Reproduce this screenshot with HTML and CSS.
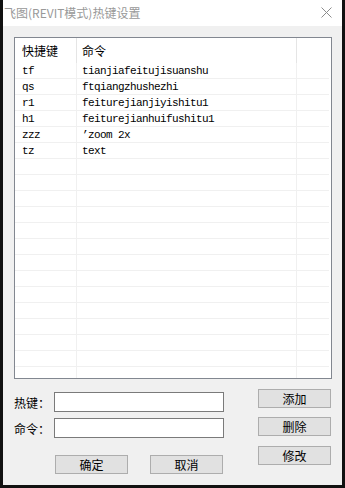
FILE: index.html
```html
<!DOCTYPE html>
<html lang="zh-CN">
<head>
    <meta charset="UTF-8">
    <meta name="viewport" content="width=device-width, initial-scale=1.0">
    <title>飞图(REVIT模式)热键设置</title>
    <link rel="stylesheet" href="styles.css">
</head>
<body>
    <div class="window">
        <!-- Title bar -->
        <div class="titlebar">
            <span class="title">飞图(REVIT模式)热键设置</span>
            <svg class="close" width="11" height="11" viewBox="0 0 11 11">
                <path d="M0.5 0.5 L10.5 10.5 M10.5 0.5 L0.5 10.5" stroke="#8c8c8c" stroke-width="1" fill="none"/>
            </svg>
        </div>

        <div class="content">
            <!-- Hotkey list -->
            <div class="list">
                <div class="list-head">
                    <div class="cell c1">快捷键</div>
                    <div class="cell c2">命令</div>
                    <div class="cell c3"></div>
                </div>
                <div class="list-body" id="listBody"></div>
            </div>

            <!-- Edit area -->
            <div class="bottom">
                <div class="fields">
                    <div class="field">
                        <label class="label">热键：</label>
                        <input class="input" type="text">
                    </div>
                    <div class="field second">
                        <label class="label">命令：</label>
                        <input class="input" type="text">
                    </div>
                    <div class="actions">
                        <button class="btn">确定</button>
                        <button class="btn">取消</button>
                    </div>
                </div>
                <div class="side">
                    <button class="btn">添加</button>
                    <button class="btn del">删除</button>
                    <button class="btn edit">修改</button>
                </div>
            </div>
        </div>
    </div>

    <script>
        const hotkeys = [
            ['tf', 'tianjiafeitujisuanshu'],
            ['qs', 'ftqiangzhushezhi'],
            ['r1', 'feiturejianjiyishitu1'],
            ['h1', 'feiturejianhuifushitu1'],
            ['zzz', '\u2019zoom 2x'],
            ['tz', 'text']
        ];

        const listBody = document.getElementById('listBody');
        for (let i = 0; i < 20; i++) {
            const row = document.createElement('div');
            row.className = 'row';
            const item = hotkeys[i] || ['', ''];
            row.innerHTML = '<div class="cell c1">' + item[0] + '</div>' +
                            '<div class="cell c2">' + item[1] + '</div>' +
                            '<div class="cell c3"></div>';
            listBody.appendChild(row);
        }
    </script>
</body>
</html>
```

FILE: styles.css
```css
html, body {
    margin: 0;
    height: 100%;
}

body {
    background-color: #111;
    font-family: "Noto Sans CJK SC", "Noto Sans", sans-serif;
    font-size: 12px;
    color: #000;
}

.window {
    margin: 0 3px 0 3px;
    height: 485px;
    background-color: #f0f0f0;
    display: flex;
    flex-direction: column;
}

/* Title bar */
.titlebar {
    height: 26px;
    background-color: #fff;
    display: flex;
    align-items: center;
    justify-content: space-between;
    padding: 0 10px 0 1px;
}

.title {
    color: #999;
    font-size: 12px;
    line-height: 26px;
}

.close {
    display: block;
    margin-top: -1px;
}

.content {
    padding: 11px 10px 0 11px;
}

/* List view */
.list {
    height: 342px;
    box-sizing: border-box;
    border: 1px solid #828790;
    background-color: #fff;
    overflow: hidden;
}

.list-head {
    display: flex;
    height: 25px;
}

.list-head .cell {
    line-height: 25px;
    border-right: 1px solid #e5e5e5;
}

.list-head .c3 {
    border-right: none;
}

.row {
    display: flex;
    height: 16px;
    box-sizing: border-box;
    border-bottom: 1px solid #f0f0f0;
    margin-right: 2px;
}

.row .cell {
    font-family: "Liberation Mono", monospace;
    font-size: 11px;
    letter-spacing: -0.6px;
    line-height: 15px;
    padding-top: 1px;
    border-right: 1px solid #f0f0f0;
}

.row .c3 {
    border-right: none;
}

.cell {
    box-sizing: border-box;
    white-space: nowrap;
    overflow: hidden;
}

.c1 {
    width: 62px;
    padding-left: 7px;
}

.c2 {
    width: 220px;
    padding-left: 5px;
}

.c3 {
    flex: 1;
}

/* Edit area */
.bottom {
    display: flex;
    margin-top: 10px;
}

.fields {
    display: flex;
    flex-direction: column;
}

.field {
    display: flex;
    align-items: center;
    margin-top: 3px;
}

.field.second {
    margin-top: 6px;
}

.label {
    width: 40px;
    font-size: 12px;
}

.input {
    width: 170px;
    height: 20px;
    box-sizing: border-box;
    border: 1px solid #7a7a7a;
    background-color: #fff;
    margin: 0;
    padding: 0 3px;
    outline: none;
}

.actions {
    display: flex;
    gap: 22px;
    margin-top: 17px;
    padding-left: 41px;
}

.btn {
    width: 73px;
    height: 19px;
    box-sizing: border-box;
    border: 1px solid #adadad;
    background-color: #e1e1e1;
    font-family: "Noto Sans CJK SC", "Noto Sans", sans-serif;
    font-size: 12px;
    line-height: 16px;
    padding: 0;
    margin: 0;
    color: #000;
}

.side {
    margin-left: auto;
    margin-right: 1px;
    display: flex;
    flex-direction: column;
}

.side .del {
    margin-top: 9px;
}

.side .edit {
    margin-top: 10px;
}
```
